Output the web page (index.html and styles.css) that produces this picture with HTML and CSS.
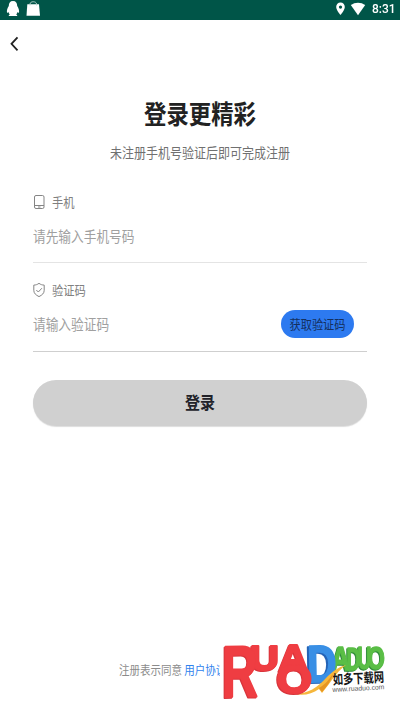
FILE: index.html
```html
<!DOCTYPE html>
<html lang="zh-CN">
<head>
<meta charset="utf-8">
<title>登录</title>
<link rel="stylesheet" href="styles.css">
</head>
<body>
<div class="screen">
  <header class="status">
    <svg width="50" height="20" viewBox="0 0 50 20" fill="#fff">
      <path d="M13 1c-3 0-4.200 2-4.200 5C7.500 8 6.500 10.500 7 12.500c.4.500 1.200 0 1.600-.6.200 1.400.7 2 1.200 2.500-1.300.5-1.500 1.500-.3 1.700h7c1.200-.2 1-1.200-.3-1.700.5-.5 1-1.100 1.200-2.500.4.600 1.200 1.100 1.600.6.500-2-.5-4.500-1.800-6.500C17.200 3 16 1 13 1z"/>
      <path d="M27.300 4.200H39l1 11.500H26.500z"/>
      <path d="M30 5.500V4c0-3 6.500-3 6.500 0v1.500" fill="none" stroke="#bdd8d3" stroke-width=".9"/>
    </svg>
    <div class="status-right">
      <svg width="32" height="20" viewBox="0 0 32 20" fill="#fff">
        <path fill-rule="evenodd" d="M5.500 2.400C3 2.400 1.200 4.200 1.200 6.900c0 3.200 4.300 8 4.300 8s4.300-4.800 4.300-8c0-2.700-1.800-4.500-4.300-4.500zm0 3a1.600 1.700 0 1 1 0 3.400 1.600 1.700 0 0 1 0-3.400z"/>
        <path d="M15.800 5.100c4-3.300 10.400-3.300 14.400 0L23 15.200z"/>
      </svg>
      <span class="clock">8:31</span>
    </div>
  </header>
  <nav class="nav">
    <svg width="12" height="16" viewBox="0 0 12 16" fill="none" stroke="#222" stroke-width="1.800"><path d="M8.500 1.300 2.500 7.800l6 6.500"/></svg>
  </nav>
  <main class="content">
    <h1 class="title"><span class="tall">登录更精彩</span></h1>
    <p class="subtitle"><span class="tall">未注册手机号验证后即可完成注册</span></p>
    <section class="field phone">
      <div class="label">
        <svg width="12" height="16" viewBox="0 0 12 16" fill="none" stroke="#858585"><rect x="1.500" y="1.500" width="9.500" height="13" rx="1.500"/><path d="M1.500 11.500H11M5 13h2.500"/></svg>
        <span class="tall">手机</span>
      </div>
      <div class="row"><span class="tall">请先输入手机号码</span></div>
    </section>
    <section class="field code">
      <div class="label">
        <svg width="12" height="16" viewBox="0 0 12 16" fill="none" stroke="#858585"><path d="M6 1.300c1.600 1.300 3.200 1.700 5.200 1.800v5.200c0 3-2 4.700-5.200 6.300C2.800 13 .8 11.300.8 8.300V3.100C2.800 3 4.400 2.600 6 1.300zM3.300 8l2 2 3.600-3.800"/></svg>
        <span class="tall">验证码</span>
      </div>
      <div class="row"><span class="tall">请输入验证码</span><button class="get-code"><span class="tall">获取验证码</span></button></div>
    </section>
    <button class="login"><span class="tall">登录</span></button>
  </main>
  <footer class="terms"><span class="tall">注册表示同意 <a>用户协议</a></span></footer>
  <svg class="brand" width="180" height="80" viewBox="220 630 180 80">
    <rect x="220" y="630" width="180" height="80" fill="#fff"/>
    <g class="block green">
      <text transform="translate(367.500 668.500) scale(.72 1)" font-size="31">O</text>
      <text transform="translate(357.500 669) scale(.62 1)" font-size="31">U</text>
      <text transform="translate(346.500 669.500) scale(.62 1)" font-size="31">D</text>
      <text transform="translate(331 670) scale(.8 1)" font-size="33">A</text>
    </g>
    <g class="block blue">
      <text transform="translate(307.500 682) rotate(-1) scale(.78 1)" font-size="52">D</text>
    </g>
    <path d="M294 694c14 0 24-7 32-16 6-6 12-11 20-13-8 6-12 12-17 19l-7 9-3-4c-7 5-15 7-25 5z" fill="#f6b73c"/>
    <path d="M319 688c7-4 10-9 14-14-2 7-6 12-11 18z" fill="#e69522"/>
    <g class="block red">
      <text transform="translate(250 670) scale(1.120 1)" font-size="36">U</text>
      <text transform="translate(278.500 671) scale(1.120 1)" font-size="37">A</text>
      <text transform="translate(222 697) skewY(-1) scale(.68 1)" font-size="73">R</text>
      <text transform="translate(276.500 693) scale(1.150 1)" font-size="40">O</text>
    </g>
    <text class="brand-name" transform="translate(333 684.500) rotate(-3) scale(1 1.300)" font-size="10.300">如多下载网</text>
    <text class="brand-url" transform="translate(332.500 692) rotate(-3)" font-size="7" textLength="52" lengthAdjust="spacingAndGlyphs">www.ruaduo.com</text>
  </svg>
</div>
</body>
</html>
```
FILE: styles.css
```css
* { box-sizing: border-box; }
body { margin: 0; background: #fff; font-family: "Noto Sans CJK SC", sans-serif; }
button { border: 0; padding: 0; font-family: inherit; }
.screen { position: relative; display: flex; flex-direction: column; width: 400px; height: 710px; overflow: hidden; }
.tall { display: inline-block; transform: translateY(-1px) scaleY(1.15); white-space: nowrap; }
.status { display: flex; justify-content: space-between; height: 20px; background: #005548; }
.status svg { display: block; }
.status-right { display: flex; width: 65px; }
.clock { margin-left: 5px; font: 500 12px/19px Roboto, sans-serif; color: #fff; transform: scaleY(1.12); }
.nav { height: 48px; padding: 16px 0 0 9px; }
.nav svg { display: block; }
.content { padding: 0 33px; }
.title { margin: 28px 0 0; height: 34px; font-size: 22.4px; line-height: 34px; font-weight: 700; color: #222; text-align: center; }
.subtitle { margin: 13px 0 0; height: 20px; font-size: 12px; line-height: 20px; color: #707070; text-align: center; }
.field { display: flex; flex-direction: column; }
.phone { margin-top: 29px; height: 71px; border-bottom: 1px solid #e4e4e4; }
.code { margin-top: 17px; height: 72px; border-bottom: 1px solid #cfcfcf; }
.label { display: flex; align-items: center; gap: 7px; height: 20px; font-size: 11.3px; line-height: 20px; color: #808080; }
.row { display: flex; align-items: center; justify-content: space-between; height: 28px; margin-top: 10px; padding-right: 13px; font-size: 12.7px; line-height: 29px; color: #a0a0a0; }
.get-code { width: 73px; height: 28px; border-radius: 14px; background: #2d7af0; color: #14305f; font-size: 11.2px; line-height: 28px; }
.login { display: block; width: 334px; height: 46px; margin-top: 28px; border-radius: 23px; background: #d0d0d0; box-shadow: 0 1px 1px #ddd; color: #222229; font-size: 15px; line-height: 44px; font-weight: 700; }
.terms { margin: 235px 0 0 119px; font-size: 10.5px; line-height: 20px; color: #8b8b8b; }
.terms a { color: #3082ed; }
.brand { position: absolute; left: 220px; top: 630px; }
.block { font-family: "Liberation Sans", sans-serif; font-weight: 700; stroke-width: 2; stroke-linejoin: round; paint-order: stroke; }
.red { fill: #ef3d42; stroke: #ef3d42; filter: drop-shadow(-1px 1px 0 #d8343b); }
.blue { fill: #398fe5; stroke: #398fe5; filter: drop-shadow(-1.5px 1px 0 #2463b6); }
.green { fill: #5abe46; stroke: #5abe46; stroke-width: 1.5; filter: drop-shadow(-1px 1px 0 #2f8a39); }
.brand-name { font-family: "Noto Sans CJK SC", sans-serif; font-weight: 700; fill: #151515; }
.brand-url { font-family: "Liberation Sans", sans-serif; fill: #555; }
```
